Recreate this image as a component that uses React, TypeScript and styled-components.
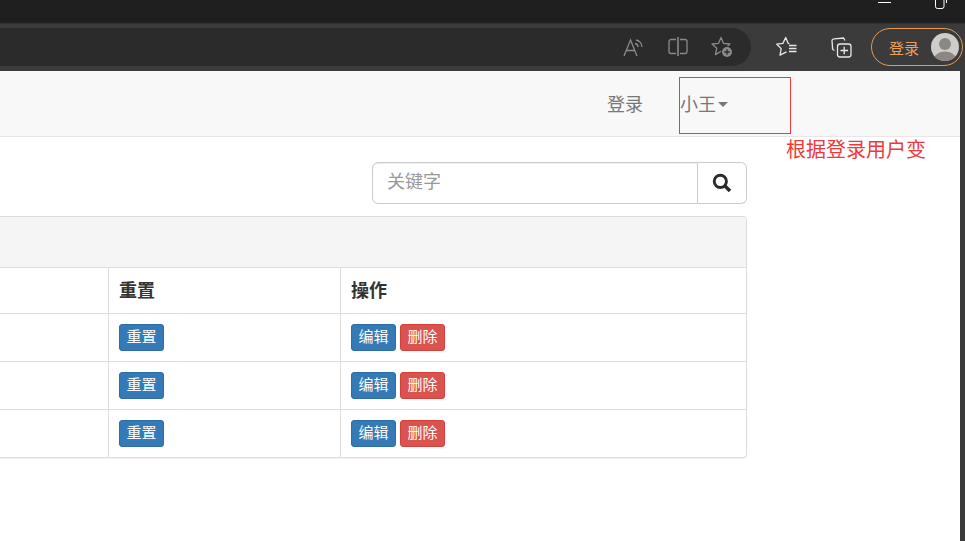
import React from "react";
import styled, { createGlobalStyle } from "styled-components";

const GlobalStyle = createGlobalStyle`
  html, body { margin: 0; padding: 0; height: 541px; overflow: hidden; background: #3b3b3b; }
  body { font-family: "Liberation Sans", "Noto Sans CJK SC", sans-serif; font-size: 14px; }
`;

const Screen = styled.div`
  width: 965px;
  height: 541px;
  display: flex;
  flex-direction: column;
  position: relative;
  overflow: hidden;
`;

const TitleBar = styled.div`
  height: 23px;
  background: #1f1f1f;
  display: flex;
  justify-content: flex-end;
  align-items: flex-start;
`;

const WinIcon = styled.svg`
  display: block;
  flex: none;
`;

const Toolbar = styled.div`
  height: 48px;
  background: #3b3b3b;
  border-top: 1px solid #333;
  box-sizing: border-box;
  display: flex;
  align-items: flex-start;
  padding-top: 4px;
`;

const AddressBar = styled.div`
  width: 751px;
  height: 38px;
  background: #2b2b2b;
  border-radius: 0 19px 19px 0;
  display: flex;
  justify-content: flex-end;
  align-items: center;
  gap: 22px;
  padding-right: 18px;
  box-sizing: border-box;
`;

const ToolIcons = styled.div`
  display: flex;
  align-items: center;
  gap: 32px;
  margin-left: 25px;
  height: 38px;
`;

const LoginPill = styled.div`
  margin-left: 19px;
  width: 92px;
  height: 38px;
  box-sizing: border-box;
  border: 1px solid #e99a52;
  border-radius: 19px;
  display: flex;
  align-items: center;
  justify-content: space-between;
  padding: 0 3px 0 17px;
  color: #f0a058;
  font-size: 15px;
`;

const Avatar = styled.div`
  width: 28px;
  height: 28px;
  border-radius: 50%;
  overflow: hidden;
  flex: none;
`;

const Body = styled.div`
  flex: 1;
  display: flex;
  min-height: 0;
`;

const Page = styled.div`
  width: 960px;
  background: #fff;
  flex: none;
`;

const Navbar = styled.nav`
  height: 66px;
  box-sizing: border-box;
  background: #f8f8f8;
  border-bottom: 1px solid #e7e7e7;
  display: flex;
  justify-content: flex-end;
  align-items: center;
  padding-right: 232px;
  gap: 36px;
  color: #777;
  font-size: 18px;
`;

const NavItem = styled.span<{ $w: number }>`
  display: flex;
  align-items: center;
  width: ${(p) => p.$w}px;
  margin-top: -1px;
`;

const Caret = styled.span`
  width: 0;
  height: 0;
  margin-left: 2px;
  margin-top: 2px;
  border-top: 5px solid #777;
  border-left: 5px solid transparent;
  border-right: 5px solid transparent;
`;

const Content = styled.div`
  padding: 25px 213px 0 0;
`;

const SearchRow = styled.div`
  display: flex;
  justify-content: flex-end;
`;

const SearchInput = styled.div`
  width: 326px;
  height: 42px;
  box-sizing: border-box;
  border: 1px solid #ccc;
  border-radius: 6px 0 0 6px;
  box-shadow: inset 0 1px 1px rgba(0, 0, 0, 0.075);
  color: #999;
  font-size: 18px;
  line-height: 38px;
  padding-left: 14px;
`;

const SearchButton = styled.div`
  width: 49px;
  height: 42px;
  box-sizing: border-box;
  border: 1px solid #ccc;
  border-left: none;
  border-radius: 0 6px 6px 0;
  display: flex;
  align-items: center;
  justify-content: center;
  background: #fff;
`;

const Panel = styled.div`
  margin-top: 12px;
  border: 1px solid #ddd;
  border-left: none;
  border-radius: 0 4px 4px 0;
  box-shadow: 0 1px 1px rgba(0, 0, 0, 0.05);
`;

const PanelHeading = styled.div`
  height: 50px;
  background: #f5f5f5;
  border-bottom: 1px solid #ddd;
  border-top-right-radius: 3px;
`;

const Row = styled.div<{ $h: number }>`
  display: grid;
  grid-template-columns: 108px 232px 1fr;
  height: ${(p) => p.$h}px;
  box-sizing: border-box;
  border-bottom: 1px solid #ddd;
  &:last-child {
    border-bottom: none;
    height: ${(p) => p.$h - 1}px;
  }
`;

const Cell = styled.div`
  border-left: 1px solid #ddd;
  padding-left: 10px;
  display: flex;
  align-items: center;
  gap: 4px;
  &:first-child {
    border-left: none;
  }
`;

const HeadCell = styled(Cell)`
  font-weight: 700;
  font-size: 18px;
  line-height: 20px;
  color: #333;
`;

const ActionButton = styled.span<{ $danger?: boolean }>`
  width: 45px;
  height: 27px;
  box-sizing: border-box;
  border-radius: 3px;
  border: 1px solid ${(p) => (p.$danger ? "#d43f3a" : "#2e6da4")};
  background: ${(p) => (p.$danger ? "#d9534f" : "#337ab7")};
  color: #fff;
  font-size: 15px;
  line-height: 20px;
  padding-bottom: 1px;
  display: flex;
  align-items: center;
  justify-content: center;
`;

const RightEdge = styled.div`
  flex: 1;
  background: #3b3b3b;
`;

const NoteBox = styled.div`
  position: absolute;
  left: 679px;
  top: 77px;
  width: 112px;
  height: 57px;
  box-sizing: border-box;
  border: 1px solid #f0393c;
`;

const NoteText = styled.div`
  position: absolute;
  left: 786px;
  top: 138px;
  color: #f0393c;
  font-size: 20px;
  line-height: 24px;
  white-space: nowrap;
`;

const Dim = "#8a8a8a";

const ReadAloud = () => (
  <WinIcon width="22" height="22" viewBox="0 0 22 22" fill="none" stroke={Dim} strokeWidth="1.3">
    <path d="M1 20 L7.5 4 L14 20 M3.5 14.5 H11.8" />
    <path d="M12 7.5 a3.5 3.5 0 0 1 3 3.5 M13 4 a7 7 0 0 1 6 7" />
  </WinIcon>
);

const SplitScreen = () => (
  <WinIcon width="22" height="22" viewBox="0 0 22 22" fill="none" stroke={Dim} strokeWidth="1.3">
    <path d="M9 3.5 H4 a2 2 0 0 0 -2 2 V15.5 a2 2 0 0 0 2 2 H9 M13 3.5 H18 a2 2 0 0 1 2 2 V15.5 a2 2 0 0 1 -2 2 H13" />
    <path d="M11 1 V20" strokeWidth="1.6" />
  </WinIcon>
);

const StarAdd = () => (
  <WinIcon width="22" height="22" viewBox="0 0 22 22" fill="none">
    <path
      d="M10 1.5 L12.6 7.4 L19 8 L14.2 12.2 L15.6 18.6 L10 15.3 L4.4 18.6 L5.8 12.2 L1 8 L7.4 7.4 Z"
      stroke={Dim}
      strokeWidth="1.3"
      strokeLinejoin="round"
    />
    <circle cx="16" cy="16" r="6" fill="#2b2b2b" />
    <circle cx="16" cy="16" r="5" fill={Dim} />
    <path d="M16 13.3 V18.7 M13.3 16 H18.7" stroke="#2b2b2b" strokeWidth="1.3" />
  </WinIcon>
);

const Favorites = () => (
  <WinIcon width="22" height="22" viewBox="0 0 22 22" fill="none" stroke="#e8e8e8" strokeWidth="1.3">
    <path
      d="M13.5 7.6 L12.2 7.4 L9.7 1.5 L6.9 7.4 L0.8 8.2 L5.2 12.6 L4 19.2 L10.5 15.8"
      strokeLinejoin="round"
    />
    <path d="M13 9.5 H20.5 M13 12.5 H20.5 M13 15.5 H20.5" />
  </WinIcon>
);

const Collections = () => (
  <WinIcon width="22" height="22" viewBox="0 0 22 22" fill="none" stroke="#e8e8e8" strokeWidth="1.3">
    <path d="M15 4.5 L13.5 2 L4 2.8 a2 2 0 0 0 -2 2 L2.5 11 a3 3 0 0 0 2 3.5" />
    <rect x="7.5" y="8" width="13.5" height="13" rx="2.5" />
    <path d="M14.2 10.8 V18.2 M10.5 14.5 H18" />
  </WinIcon>
);

const AvatarIcon = () => (
  <svg width="28" height="28" viewBox="0 0 28 28">
    <rect width="28" height="28" fill="#cfcdc9" />
    <circle cx="14" cy="11" r="6" fill="#8b8883" />
    <ellipse cx="14" cy="26" rx="11" ry="7.5" fill="#8b8883" />
  </svg>
);

const SearchIcon = () => (
  <svg width="20" height="20" viewBox="0 0 18 18" fill="none" stroke="#2a2a2a">
    <circle cx="7.5" cy="7.5" r="5.5" strokeWidth="2.6" />
    <path d="M11.5 11.5 L16.2 16.2" strokeWidth="3.2" />
  </svg>
);

const bodyRows = [0, 1, 2];

const App: React.FC = () => {
  return (
    <Screen>
      <GlobalStyle />
      <TitleBar>
        <WinIcon width="13" height="8" viewBox="0 0 13 8" style={{ marginRight: 44 }}>
          <path d="M0 2.5 H13" stroke="#fff" strokeWidth="1" />
        </WinIcon>
        <WinIcon width="13" height="9" viewBox="0 0 13 9" fill="none" stroke="#fff" style={{ marginRight: 17 }}>
          <path d="M0.5 0 V6.5 a2 2 0 0 0 2 2 H7 a2 2 0 0 0 2 -2 V0 M11.5 0 V3" />
        </WinIcon>
      </TitleBar>
      <Toolbar>
        <AddressBar>
          <ReadAloud />
          <SplitScreen />
          <StarAdd />
        </AddressBar>
        <ToolIcons>
          <Favorites />
          <Collections />
        </ToolIcons>
        <LoginPill>
          登录
          <Avatar>
            <AvatarIcon />
          </Avatar>
        </LoginPill>
      </Toolbar>
      <Body>
        <Page>
          <Navbar>
            <NavItem $w={37}>登录</NavItem>
            <NavItem $w={48}>
              小王
              <Caret />
            </NavItem>
          </Navbar>
          <Content>
            <SearchRow>
              <SearchInput>关键字</SearchInput>
              <SearchButton>
                <SearchIcon />
              </SearchButton>
            </SearchRow>
            <Panel>
              <PanelHeading />
              <Row $h={46}>
                <HeadCell />
                <HeadCell>重置</HeadCell>
                <HeadCell>操作</HeadCell>
              </Row>
              {bodyRows.map((r) => (
                <Row key={r} $h={48}>
                  <Cell />
                  <Cell>
                    <ActionButton>重置</ActionButton>
                  </Cell>
                  <Cell>
                    <ActionButton>编辑</ActionButton>
                    <ActionButton $danger>删除</ActionButton>
                  </Cell>
                </Row>
              ))}
            </Panel>
          </Content>
        </Page>
        <RightEdge />
      </Body>
      <NoteBox />
      <NoteText>根据登录用户变</NoteText>
    </Screen>
  );
};

export default App;
